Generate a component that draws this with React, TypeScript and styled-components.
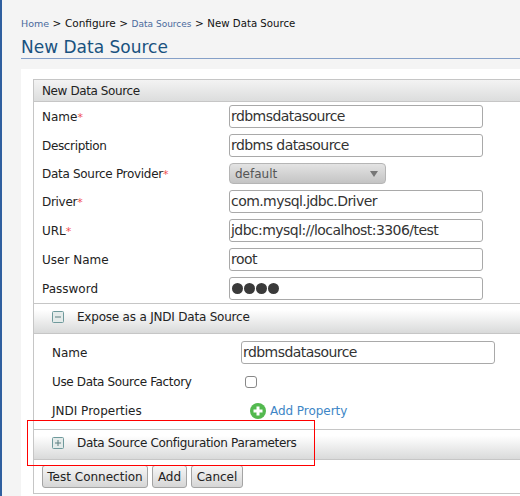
import React from "react";
import styled, { createGlobalStyle } from "styled-components";

const Global = createGlobalStyle`
  html, body { margin: 0; padding: 0; width: 520px; height: 496px; overflow: hidden; background: #f4f4f4; }
  body { font-family: "DejaVu Sans", sans-serif; }
`;
const Page = styled.div`
  position: relative;
  width: 520px; height: 496px; box-sizing: border-box; overflow: hidden;
  border-left: 2px solid #2f5f9f; background: #f4f4f4; padding: 16px 0 0 19px;
`;
const Crumbs = styled.div`
  display: flex; align-items: baseline; gap: 3.5px; height: 14px; font-size: 10.5px; line-height: 14px; color: #111; white-space: nowrap;
`;
const CrumbLink = styled.span<{ $size: number }>`
  color: #4a6a9c; font-size: ${(p) => p.$size}px;
`;
const CrumbCurrent = styled.span`
  font-size: 10.2px;
`;
const Title = styled.h1`
  margin: 6px 0 0; height: 22px; border-bottom: 1px solid #86a0c8; box-sizing: content-box;
  font-size: 17px; line-height: 22px; font-weight: 400; color: #19527f; white-space: nowrap;
`;
const Panel = styled.div`
  margin-top: 10px; background: #fff; padding: 10px 0 0 12px; height: 427px; box-sizing: border-box;
`;
const Box = styled.div`
  width: 500px; height: 415px; box-sizing: border-box; border: 1px solid #c6c6c6; display: flex; flex-direction: column;
`;
const Head = styled.div`
  height: 22px; flex: none; box-sizing: border-box; padding-left: 8px; font-size: 12px; line-height: 22px; color: #222;
  letter-spacing: -0.4px; background: linear-gradient(#f3f3f3, #dcdddd); border-bottom: 1px solid #c6c6c6;
`;
const Fields = styled.div`
  display: flex; flex-direction: column; padding: 0 0 0 8px; height: 201px; box-sizing: border-box; flex: none;
`;
const Row = styled.div<{ $h?: number }>`
  display: grid; grid-template-columns: 187px 1fr; align-items: center; height: ${(p) => p.$h ?? 29}px;
  font-size: 12px; color: #222;
`;
const Label = styled.span<{ $tight?: number }>`
  letter-spacing: ${(p) => p.$tight ?? 0}px; white-space: nowrap;
`;
const Req = styled.span` color: #f05050; font-size: 11px; letter-spacing: 0; `;
const Field = styled.div`
  width: 254px; height: 23px; box-sizing: border-box; border: 1px solid #a9a9a9; border-radius: 3px; background: #fff;
  padding-left: 1px; font-size: 14px; letter-spacing: -0.56px; line-height: 21px; color: #333; white-space: nowrap;
`;
const SelectBox = styled.div`
  width: 157px; height: 21px; box-sizing: border-box; border: 1px solid #b5b5b5; border-radius: 4px;
  background: linear-gradient(#e3e3e3, #c4c4c4); display: flex; align-items: center; justify-content: space-between;
  padding: 0 7px 0 5px; font-size: 12px; color: #555;
`;
const Caret = styled.span`
  width: 0; height: 0; border-left: 4.5px solid transparent; border-right: 4.5px solid transparent; border-top: 6px solid #777;
`;
const Dots = styled.div`
  display: flex; gap: 1px; align-items: center; height: 100%; padding-left: 1px;
`;
const Dot = styled.span` width: 11px; height: 11px; border-radius: 50%; background: #3a3a3a; `;
const Section = styled.div<{ $h: number }>`
  flex: none; height: ${(p) => p.$h}px; box-sizing: border-box; display: flex; align-items: center; gap: 13px; padding: 0 0 4px 18px;
  font-size: 12px; color: #222; background: linear-gradient(#fff 20%, #d9dada);
  border-top: 1px solid #c6c6c6; border-bottom: 1px solid #c6c6c6;
`;
const Toggle = styled.svg` width: 12px; height: 12px; flex: none; `;
const Nested = styled.div`
  flex: none; height: 95px; box-sizing: border-box; padding: 4px 0 0 18px; display: flex; flex-direction: column;
`;
const NestedRow = styled(Row)`
  grid-template-columns: 189px 1fr;
`;
const Check = styled.span`
  display: block; width: 12px; height: 12px; box-sizing: border-box; margin-left: 4px; border: 1px solid #888; border-radius: 3px; background: #fff;
`;
const AddLink = styled.span`
  display: flex; align-items: center; gap: 4px; margin-left: 9px; color: #3d86c6; font-size: 12px; letter-spacing: -0.05px;
`;
const Buttons = styled.div`
  display: flex; gap: 4px; padding: 5px 0 0 8px;
`;
const Btn = styled.button<{ $w: number }>`
  width: ${(p) => p.$w}px; height: 23px; box-sizing: border-box; border: 1px solid #a4a4a4; border-radius: 3px; padding: 0; margin: 0;
  background: linear-gradient(#f6f6f6, #d6d6d6); font: 12px "DejaVu Sans", sans-serif; color: #222;
`;
const Callout = styled.div`
  position: absolute; left: 25px; top: 420px; width: 288px; height: 46px; box-sizing: border-box; border: 1px solid #f00; pointer-events: none;
`;

const ToggleIcon = ({ plus }: { plus?: boolean }) => (
  <Toggle viewBox="0 0 12 12">
    <rect x="0.5" y="0.5" width="11" height="11" rx="1" fill="#e4ebea" stroke="#6f9a9c" />
    <path d={plus ? "M3 6h6M6 3v6" : "M3 6h6"} stroke="#5d7f80" strokeWidth="1" fill="none" />
  </Toggle>
);

export default function App() {
  return (
    <Page>
      <Global />
      <Crumbs>
        <CrumbLink $size={9.5}>Home</CrumbLink><span>&gt;</span><span>Configure</span><span>&gt;</span>
        <CrumbLink $size={9}>Data Sources</CrumbLink><span>&gt;</span><CrumbCurrent>New Data Source</CrumbCurrent>
      </Crumbs>
      <Title>New Data Source</Title>
      <Panel>
        <Box>
          <Head>New Data Source</Head>
          <Fields>
            <Row><Label>Name<Req>*</Req></Label><Field>rdbmsdatasource</Field></Row>
            <Row><Label $tight={-0.35}>Description</Label><Field>rdbms datasource</Field></Row>
            <Row $h={27}><Label $tight={-0.3}>Data Source Provider<Req>*</Req></Label><SelectBox>default<Caret /></SelectBox></Row>
            <Row><Label $tight={-0.3}>Driver<Req>*</Req></Label><Field>com.mysql.jdbc.Driver</Field></Row>
            <Row><Label>URL<Req>*</Req></Label><Field>jdbc:mysql://localhost:3306/test</Field></Row>
            <Row><Label>User Name</Label><Field>root</Field></Row>
            <Row><Label>Password</Label><Field><Dots><Dot /><Dot /><Dot /><Dot /></Dots></Field></Row>
          </Fields>
          <Section $h={31}><ToggleIcon /><Label $tight={-0.21}>Expose as a JNDI Data Source</Label></Section>
          <Nested>
            <NestedRow><Label>Name</Label><Field>rdbmsdatasource</Field></NestedRow>
            <NestedRow><Label $tight={-0.35}>Use Data Source Factory</Label><Check /></NestedRow>
            <NestedRow><Label>JNDI Properties</Label>
              <AddLink>
                <svg width="16" height="16" viewBox="0 0 16 16">
                  <circle cx="8" cy="8" r="8" fill="#53b94f" />
                  <path d="M8 3.5v9M3.5 8h9" stroke="#fff" strokeWidth="3" />
                </svg>
                Add Property
              </AddLink>
            </NestedRow>
          </Nested>
          <Section $h={31}><ToggleIcon plus /><Label $tight={-0.33}>Data Source Configuration Parameters</Label></Section>
          <Buttons><Btn $w={106}>Test Connection</Btn><Btn $w={35}>Add</Btn><Btn $w={52}>Cancel</Btn></Buttons>
        </Box>
      </Panel>
      <Callout />
    </Page>
  );
}
